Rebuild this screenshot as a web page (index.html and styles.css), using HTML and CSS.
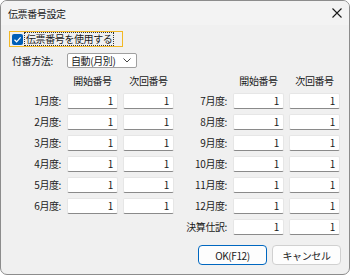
FILE: index.html
```html
<!DOCTYPE html>
<html lang="ja">
<head>
    <meta charset="UTF-8">
    <title>伝票番号設定</title>
    <link rel="stylesheet" href="styles.css">
</head>
<body>
    <div class="window">
        <div class="titlebar">
            <span class="title">伝票番号設定</span>
            <svg class="close" width="10" height="10" viewBox="0 0 10 10">
                <path d="M0.5 0.5 L9.5 9.5 M9.5 0.5 L0.5 9.5" stroke="#1a1a1a" stroke-width="1.1" fill="none"/>
            </svg>
        </div>
        <div class="content">
            <div class="check-row">
                <span class="checkbox">
                    <svg width="9" height="9" viewBox="0 0 9 9">
                        <path d="M1.5 4.8 L3.6 6.8 L7.6 2.3" stroke="#fff" stroke-width="1.2" fill="none"/>
                    </svg>
                </span>
                <span class="check-label">伝票番号を使用する</span>
            </div>
            <div class="method-row">
                <span class="method-label">付番方法:</span>
                <div class="combo">
                    <span>自動(月別)</span>
                    <svg width="8" height="5" viewBox="0 0 8 5">
                        <path d="M0.5 0.5 L4 4 L7.5 0.5" stroke="#444" stroke-width="1" fill="none"/>
                    </svg>
                </div>
            </div>
            <div class="months">
                <span></span>
                <span class="head">開始番号</span>
                <span class="head">次回番号</span>
                <span></span>
                <span class="head">開始番号</span>
                <span class="head">次回番号</span>

                <label>1月度:</label><div class="num">1</div><div class="num">1</div>
                <label>7月度:</label><div class="num">1</div><div class="num">1</div>

                <label>2月度:</label><div class="num">1</div><div class="num">1</div>
                <label>8月度:</label><div class="num">1</div><div class="num">1</div>

                <label>3月度:</label><div class="num">1</div><div class="num">1</div>
                <label>9月度:</label><div class="num">1</div><div class="num">1</div>

                <label>4月度:</label><div class="num">1</div><div class="num">1</div>
                <label>10月度:</label><div class="num">1</div><div class="num">1</div>

                <label>5月度:</label><div class="num">1</div><div class="num">1</div>
                <label>11月度:</label><div class="num">1</div><div class="num">1</div>

                <label>6月度:</label><div class="num">1</div><div class="num">1</div>
                <label>12月度:</label><div class="num">1</div><div class="num">1</div>

                <span></span><span></span><span></span>
                <label>決算仕訳:</label><div class="num">1</div><div class="num">1</div>
            </div>
            <div class="buttons">
                <button class="btn default">OK(F12)</button>
                <button class="btn">キャンセル</button>
            </div>
        </div>
    </div>
</body>
</html>
```

FILE: styles.css
```css
body {
    margin: 0;
    font-family: "Noto Sans CJK JP", "Noto Sans", sans-serif;
    font-size: 10px;
    letter-spacing: -0.4px;
    color: #1a1a1a;
    background: #ffffff;
}
.window {
    width: 350px;
    height: 275px;
    box-sizing: border-box;
    border: 1px solid #8c8c8c;
    border-radius: 7px;
    background: #f0f0f0;
    overflow: hidden;
}
.titlebar {
    height: 24px;
    background: #f3f3f3;
    display: flex;
    align-items: center;
    justify-content: space-between;
    padding: 0 7px 0 7px;
}
.title {
    font-size: 10px;
}
.content {
    padding: 6px 8px 0 8px;
}
.check-row {
    display: inline-flex;
    align-items: center;
    height: 14px;
    padding: 0 9px 0 2px;
    border: 1px solid #f2b824;
}
.checkbox {
    width: 11px;
    height: 11px;
    border-radius: 2px;
    background: #005fb8;
    display: flex;
    align-items: center;
    justify-content: center;
    margin-right: 2px;
}
.check-label {
    outline: 1px dotted #333;
    line-height: 12px;
    padding: 0 1px;
}
.method-row {
    display: flex;
    align-items: center;
    margin-top: 6px;
}
.method-label {
    width: 55px;
    padding-left: 3px;
}
.combo {
    width: 70px;
    height: 15px;
    box-sizing: border-box;
    border: 1px solid #a0a0a0;
    border-radius: 2px;
    background: #ffffff;
    display: flex;
    align-items: center;
    justify-content: space-between;
    padding: 0 5px 0 3px;
}
.months {
    display: grid;
    grid-template-columns: 53px 51px 51px 49px 51px 51px;
    grid-template-rows: 16px repeat(7, 16px);
    column-gap: 5px;
    row-gap: 5px;
    margin-top: 4px;
}
.head {
    text-align: center;
    align-self: end;
    line-height: 14px;
}
.months label {
    text-align: right;
    line-height: 16px;
    padding-right: 1px;
}
.num {
    background: #ffffff;
    border: 1px solid #e6e6e6;
    border-bottom: 1px solid #8a8a8a;
    border-radius: 2px;
    box-sizing: border-box;
    text-align: right;
    line-height: 14px;
    padding-right: 4px;
}
.buttons {
    display: flex;
    justify-content: flex-end;
    gap: 5px;
    margin-top: 10px;
}
.btn {
    width: 69px;
    height: 20px;
    font-family: inherit;
    font-size: 10px;
    letter-spacing: -0.4px;
    color: #1a1a1a;
    background: #fdfdfd;
    border: 1px solid #d0d0d0;
    border-radius: 4px;
    padding: 0;
}
.btn.default {
    border: 1px solid #0067c0;
}
```
